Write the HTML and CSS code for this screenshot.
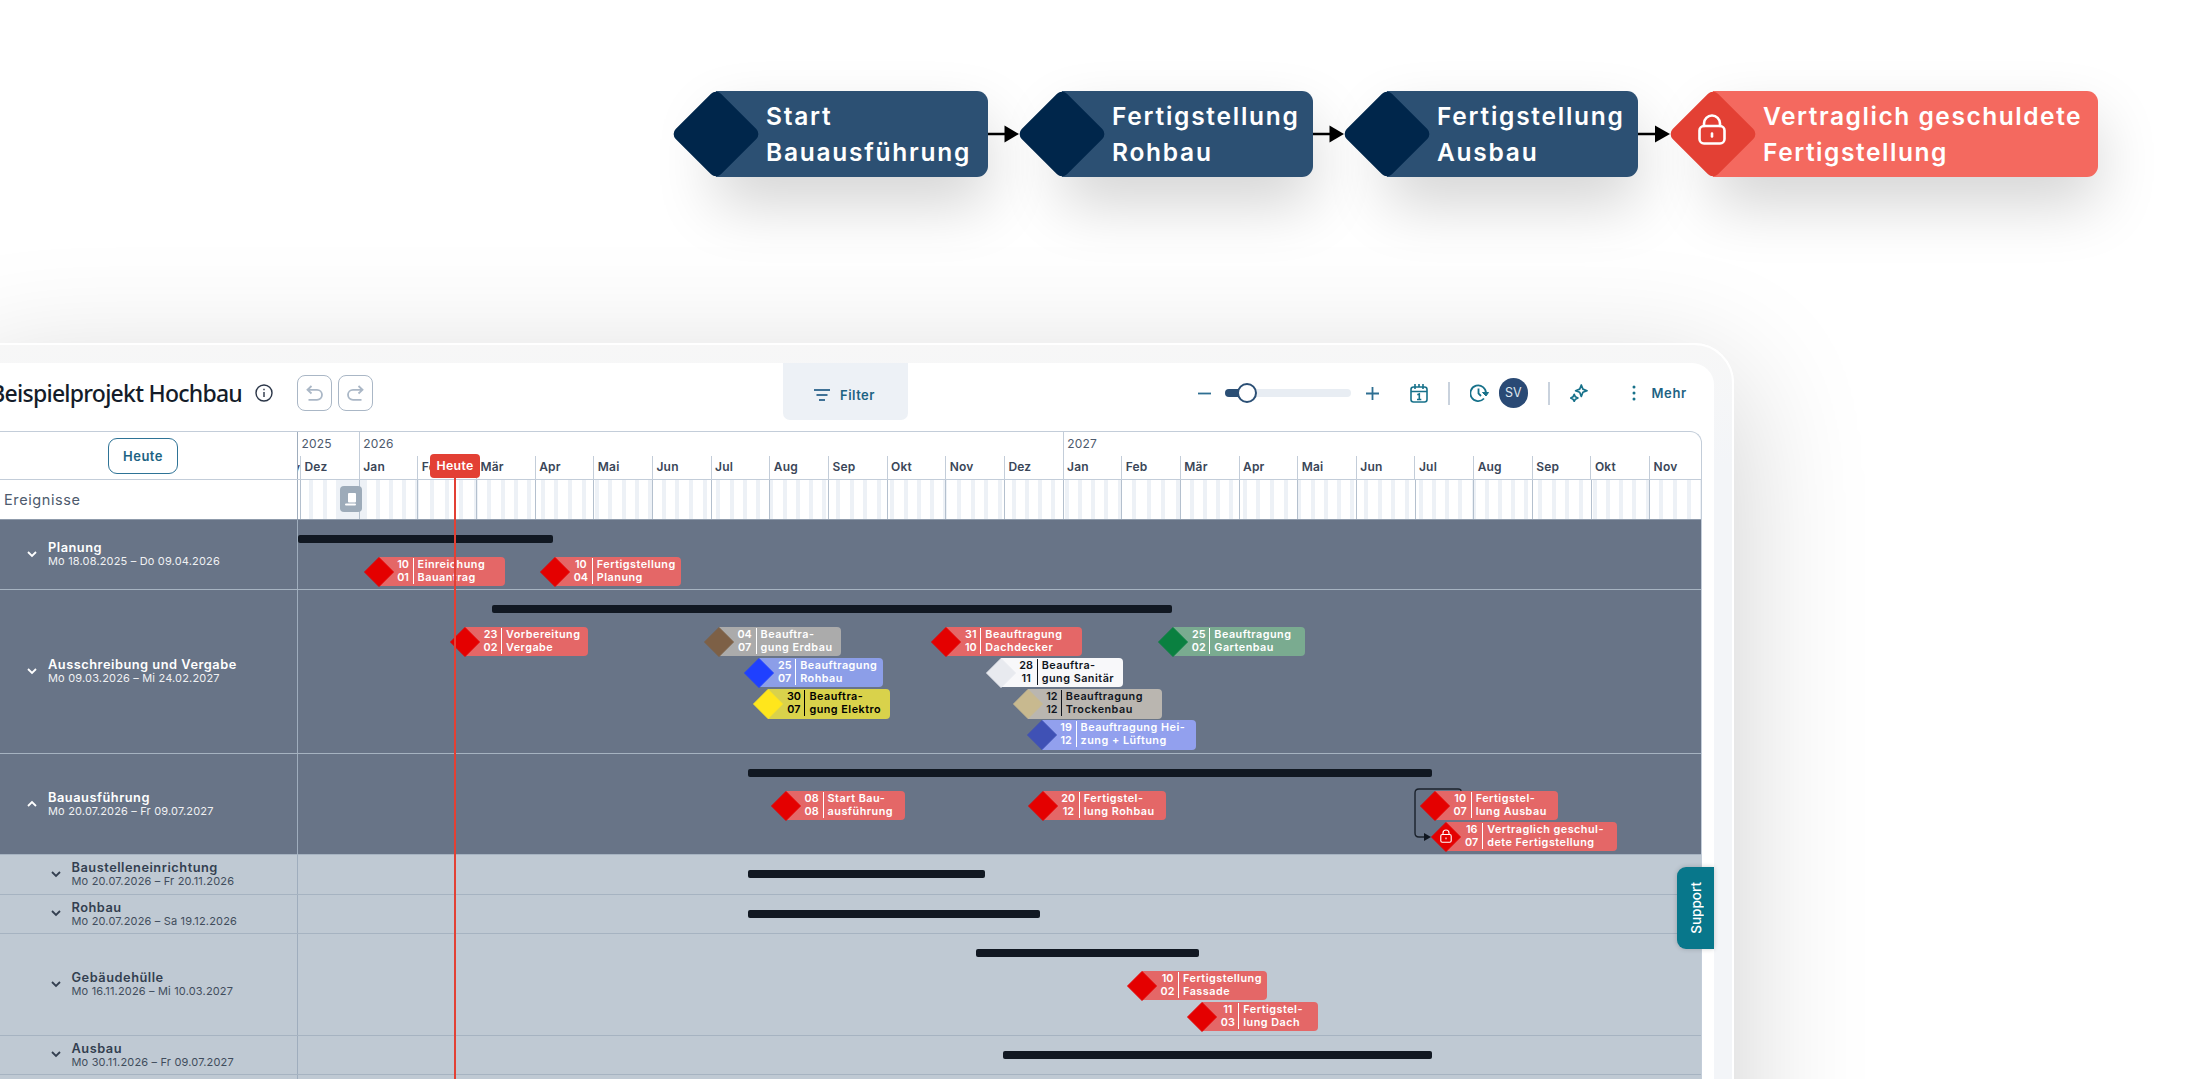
FILE: index.html
```
<!DOCTYPE html>
<html lang="de">
<head>
    <meta charset="UTF-8">
    <meta name="viewport" content="width=device-width, initial-scale=1.0">
    <title>Beispielprojekt Hochbau</title>
    <link rel="stylesheet" href="styles.css">
</head>
<body>

<div class="flow">
    <div class="step step-1">
        <div class="step-diamond"></div>
        <div class="step-body">Start<br>Bauausführung</div>
    </div>
    <svg class="arrow" width="31" height="18" viewBox="0 0 31 18"><path d="M0 9H18" stroke="#000" stroke-width="2.5"/><path d="M16.500 .5L31 9L16.500 17.500Z"/></svg>
    <div class="step step-2">
        <div class="step-diamond"></div>
        <div class="step-body">Fertigstellung<br>Rohbau</div>
    </div>
    <svg class="arrow" width="31" height="18" viewBox="0 0 31 18"><path d="M0 9H18" stroke="#000" stroke-width="2.5"/><path d="M16.500 .5L31 9L16.500 17.500Z"/></svg>
    <div class="step step-3">
        <div class="step-diamond"></div>
        <div class="step-body">Fertigstellung<br>Ausbau</div>
    </div>
    <svg class="arrow" width="32" height="18" viewBox="0 0 32 18"><path d="M0 9H18" stroke="#000" stroke-width="2.5"/><path d="M17 .5L32 9L17 17.500Z"/></svg>
    <div class="step step-4 step-red">
        <div class="step-diamond">
            <svg width="30" height="32" viewBox="0 0 30 32" fill="none" stroke="#fff" stroke-width="2.6" stroke-linecap="round"><rect x="2.500" y="12" width="25" height="17.500" rx="4.500"/><path d="M7 12V9.500a8 8 0 0 1 16 0V12"/><path d="M15 19.500V22.500"/></svg>
        </div>
        <div class="step-body">Vertraglich geschuldete<br>Fertigstellung</div>
    </div>
</div>

<div class="device">
    <div class="screen">
        <header class="toolbar">
            <h1 class="title">Beispielprojekt Hochbau</h1>
            <svg class="info" width="18" height="18" viewBox="0 0 18 18" fill="none" stroke="#2b3648" stroke-width="1.4"><circle cx="9" cy="9" r="8"/><path d="M9 8V13M9 4.800V6.300"/></svg>
            <div class="undo-group">
                <button class="btn-icon"><svg width="17" height="17" viewBox="0 0 17 17"><path d="M5.500 1L1.500 4.800L5.500 8.500M1.500 4.800H11A4.700 4.700 0 0 1 11 14.800H2.500"/></svg></button>
                <button class="btn-icon"><svg width="17" height="17" viewBox="0 0 17 17"><path d="M11.500 1L15.500 4.800L11.500 8.500M15.500 4.800H6A4.700 4.700 0 0 0 6 14.800H14.500"/></svg></button>
            </div>
            <div class="filter">
                <svg width="16" height="14" viewBox="0 0 16 14" fill="none" stroke="#3f7196" stroke-width="2"><path d="M0 2H16M2.500 7H13.500M5 12H11"/></svg>
                <span>Filter</span>
            </div>
            <div class="tools">
                <svg width="13" height="13" viewBox="0 0 13 13" stroke="#2f6f92" stroke-width="1.8"><path d="M0 6.500H13"/></svg>
                <div class="slider"><div class="slider-fill"></div><div class="slider-knob"></div></div>
                <svg class="plus" width="13" height="13" viewBox="0 0 13 13" stroke="#2f6f92" stroke-width="1.8"><path d="M0 6.500H13M6.500 0V13"/></svg>
                <svg class="calendar" width="18" height="19" viewBox="0 0 18 19" fill="none" stroke="#17718a" stroke-width="1.6"><rect x="1" y="3" width="16" height="15" rx="2.500"/><path d="M1 7.500H17M5 0V5M13 0V5M9 0V3M7.300 10.800L9.300 10V15.500M7 15.500H11.300"/></svg>
                <div class="divider"></div>
                <svg class="history" width="19" height="18" viewBox="0 0 19 18" fill="none" stroke="#17718a" stroke-width="1.8"><path d="M14 14.500A7.800 7.800 0 1 1 16 9.500"/><path d="M8.500 4.500V9.500L11 12"/><path d="M12.500 8.500H18.500L16 12Z" fill="#17718a" stroke-width="1"/></svg>
                <div class="avatar">SV</div>
                <div class="divider divider-2"></div>
                <svg class="sparkle" width="18" height="18" viewBox="0 0 18 18" fill="none" stroke="#17718a" stroke-width="1.7" stroke-linejoin="round"><path d="M11.300 1L12.900 5.100L17 6.700L12.900 8.300L11.300 12.400L9.700 8.300L5.600 6.700L9.700 5.100Z"/><path d="M4.200 10.300L5.400 12.800L7.900 14L5.400 15.200L4.200 17.400L3 15.200L.8 14L3 12.800Z"/></svg>
                <svg class="dots" width="4" height="18" viewBox="0 0 4 18" fill="#17718a"><circle cx="2" cy="3" r="1.500"/><circle cx="2" cy="9" r="1.500"/><circle cx="2" cy="15" r="1.500"/></svg>
                <span class="more">Mehr</span>
            </div>
        </header>

        <div class="board">
            <div class="head">
                <div class="head-left"><button class="btn-today">Heute</button></div>
                <div class="head-time">
                    <div class="years">
                        <div class="year year-first">2025</div>
                        <div class="year year-full">2026</div>
                        <div class="year">2027</div>
                    </div>
                    <div class="months" id="months"><span class="month-cut">Nov</span></div>
                </div>
            </div>
            <div class="events">
                <div class="events-label">Ereignisse</div>
                <div class="events-time" id="events-time">
                    <div class="event-icon">
                        <svg width="12" height="13" viewBox="0 0 12 13" fill="#fff"><rect x="3" y="0" width="8" height="9.500" rx="1"/><rect x="0" y="10.500" width="11" height="2" rx="1"/></svg>
                    </div>
                </div>
            </div>
            <div id="rows"></div>
            <div class="today-line"></div>
            <div class="today-flag">Heute</div>
        </div>

        <div class="support"><span>Support</span></div>
    </div>
</div>

<script>
    const TIME_LEFT = 298;
    const MONTH_WIDTH = 58.67;
    const FIRST_MONTH = 2;
    const monthNames = ["Jan", "Feb", "Mär", "Apr", "Mai", "Jun", "Jul", "Aug", "Sep", "Okt", "Nov", "Dez"];

    // bar: [from, to], milestones: [center, right, lane, date column, day, month, line 1, line 2, color]
    let rows = [
        {name: "Planung", date: "Mo 18.08.2025 – Do 09.04.2026", height: 70, level: 0, bar: [298, 552.5], items: [
            [378.6, 505, 0, 12, "10", "01", "Einreichung", "Bauantrag", "red"],
            [554.8, 680.6, 0, 15, "10", "04", "Fertigstellung", "Planung", "red"]
        ]},
        {name: "Ausschreibung und Vergabe", date: "Mo 09.03.2026 – Mi 24.02.2027", height: 164, level: 0, bar: [492, 1171.7], items: [
            [465, 588.2, 0, 14, "23", "02", "Vorbereitung", "Vergabe", "red"],
            [718.6, 840.7, 0, 15, "04", "07", "Beauftra-", "gung Erdbau", "brown"],
            [759.2, 882.8, 1, 14, "25", "07", "Beauftragung", "Rohbau", "blue"],
            [768.4, 890, 2, 14, "30", "07", "Beauftra-", "gung Elektro", "yellow"],
            [946.3, 1082.2, 0, 12, "31", "10", "Beauftragung", "Dachdecker", "red"],
            [1000.7, 1122.7, 1, 14, "28", "11", "Beauftra-", "gung Sanitär", "white"],
            [1027.8, 1162.5, 2, 11, "12", "12", "Beauftragung", "Trockenbau", "sand"],
            [1041.6, 1196.2, 3, 12, "19", "12", "Beauftragung Hei-", "zung + Lüftung", "indigo"],
            [1173.3, 1305, 0, 14, "25", "02", "Beauftragung", "Gartenbau", "green"]
        ]},
        {name: "Bauausführung", date: "Mo 20.07.2026 – Fr 09.07.2027", height: 101, level: 0, open: true, link: true, bar: [748, 1432], items: [
            [785.6, 905.4, 0, 15, "08", "08", "Start Bau-", "ausführung", "red"],
            [1042.8, 1166.4, 0, 14, "20", "12", "Fertigstel-", "lung Rohbau", "red"],
            [1434.7, 1558, 0, 14, "10", "07", "Fertigstel-", "lung Ausbau", "red"],
            [1446.2, 1617, 1, 14, "16", "07", "Vertraglich geschul-", "dete Fertigstellung", "red", true]
        ]},
        {name: "Baustelleneinrichtung", date: "Mo 20.07.2026 – Fr 20.11.2026", height: 40, level: 1, bar: [748, 984.5], items: []},
        {name: "Rohbau", date: "Mo 20.07.2026 – Sa 19.12.2026", height: 39, level: 1, bar: [748, 1040], items: []},
        {name: "Gebäudehülle", date: "Mo 16.11.2026 – Mi 10.03.2027", height: 102, level: 1, bar: [975.5, 1199], items: [
            [1142, 1266.7, 0, 14, "10", "02", "Fertigstellung", "Fassade", "red"],
            [1202.3, 1318, 1, 14, "11", "03", "Fertigstel-", "lung Dach", "red"]
        ]},
        {name: "Ausbau", date: "Mo 30.11.2026 – Fr 09.07.2027", height: 39, level: 1, bar: [1003, 1432], items: []},
        {name: "", date: "", height: 40, level: 1, items: []}
    ];

    function showMonths() {
        let text = "";
        for (let i = 0; i < 24; i++) {
            text += `<div class="month">${monthNames[(i + 11) % 12]}</div>`;
        }
        document.getElementById("months").innerHTML += text;
    }

    function showWeekends() {
        let text = `<div class="holiday"></div>`;
        for (let i = 0; i < 24; i++) {
            let start = FIRST_MONTH + i * MONTH_WIDTH;
            let days = new Date(2025, 12 + i, 0).getDate();
            let dayWidth = MONTH_WIDTH / days;
            for (let d = 1; d <= days; d++) {
                if (new Date(2025, 11 + i, d).getDay() === 6) {
                    text += `<i class="weekend" style="left:${start + (d - 1) * dayWidth}px"></i>`;
                }
            }
            text += `<i class="month-line" style="left:${start}px"></i>`;
        }
        document.getElementById("events-time").insertAdjacentHTML("afterbegin", text);
    }

    function milestone(m) {
        let left = m[0] - TIME_LEFT;
        let lock = m[9] ? `<svg class="lock" width="12" height="14" viewBox="0 0 12 14" fill="none" stroke="#fff" stroke-width="1.1"><rect x=".8" y="5.500" width="10.400" height="7.700" rx="1.500"/><path d="M3 5.500V4a3 3 0 0 1 6 0V5.500M6 8.500V10.300"/></svg>` : "";
        return `<div class="milestone ${m[8]}" style="left:${left}px; width:${m[1] - m[0]}px; top:${36.5 + m[2] * 31.3}px">
            <svg class="diamond" width="30" height="30" viewBox="0 0 30 30"><path d="M15 .5L29.500 15L15 29.500L.5 15Z" stroke-width="1" stroke-linejoin="round"/></svg>${lock}
            <div class="ms-date" style="width:${m[3]}px"><span>${m[4]}</span><span>${m[5]}</span></div>
            <div class="ms-text">${m[6]}<br>${m[7]}</div>
        </div>`;
    }

    function showRows() {
        let text = "";
        rows.forEach((row) => {
            text += `<div class="row level-${row.level}" style="height:${row.height}px">`;
            text += `<div class="row-label">`;
            if (row.name) {
                text += `<svg class="chevron ${row.open ? "open" : ""}" width="10" height="7" viewBox="0 0 10 7"><path d="M1 1L5 5L9 1"/></svg>`;
                text += `<div><div class="row-name">${row.name}</div><div class="row-date">${row.date}</div></div>`;
            }
            text += `</div><div class="row-time">`;
            if (row.bar) {
                text += `<div class="bar" style="left:${row.bar[0] - TIME_LEFT}px; width:${row.bar[1] - row.bar[0]}px"></div>`;
            }
            if (row.link) {
                text += `<svg class="link" width="50" height="56" viewBox="0 0 50 56"><path d="M48 6V5Q48 3 45 3H6Q2 3 2 7V47Q2 51 6 51H12" fill="none" stroke="#1b222c" stroke-width="1.400"/><path d="M11 47L18 51L11 55Z" fill="#101720"/></svg>`;
            }
            row.items.forEach((m) => text += milestone(m));
            text += `</div></div>`;
        });
        document.getElementById("rows").innerHTML = text;
    }

    showMonths();
    showWeekends();
    showRows();
</script>

</body>
</html>
```
FILE: styles.css
```
* {
    box-sizing: border-box;
}

html {
    overflow: hidden;
}

body {
    margin: 0;
    width: 2200px;
    height: 1079px;
    overflow: hidden;
    background: #fff;
    font-family: Inter, "Open Sans", sans-serif;
    color: #3a4658;
}

button {
    font-family: inherit;
    padding: 0;
    background: #fff;
}

/* milestone chain on top */
.flow {
    display: flex;
    align-items: center;
    padding: 91px 0 0 673px;
    position: relative;
    z-index: 2;
}

.step {
    display: flex;
    height: 86px;
    align-items: center;
    flex: none;
}

.step-diamond {
    width: 64px;
    height: 64px;
    margin: 0 11px;
    border-radius: 7px;
    background: #00264b;
    transform: rotate(45deg);
    position: relative;
    z-index: 1;
    flex: none;
    display: flex;
    align-items: center;
    justify-content: center;
}

.step-diamond svg {
    transform: rotate(-45deg) translate(-1px, -4px);
}

.step-body {
    flex: 1;
    height: 86px;
    margin-left: -43px;
    padding: 7px 0 0 50px;
    border-radius: 0 11px 11px 0;
    background: #2c5073;
    color: #fff;
    font-size: 24.500px;
    font-weight: 600;
    line-height: 36.300px;
    letter-spacing: 1.750px;
    white-space: nowrap;
    box-shadow: 0 28px 60px rgba(0, 0, 0, .17);
}

.step-1 { width: 315px; }
.step-2 { width: 294px; }
.step-3 { width: 294px; }
.step-4 { width: 428px; }

.step-red .step-diamond {
    background: #e34034;
}

.step-red .step-body {
    background: #f4695f;
    letter-spacing: 1.550px;
}

.arrow {
    flex: none;
    position: relative;
    z-index: 1;
}

/* device frame */
.device {
    width: 1774px;
    height: 900px;
    margin: 166px 0 0 -40px;
    padding: 18px 17px 0 38px;
    border: 2px solid #fff;
    border-radius: 40px;
    background: linear-gradient(to bottom, #f7f7f7, #f3f5f8 120px);
    box-shadow: 0 35px 130px 5px rgba(0, 0, 0, .18);
}

.screen {
    position: relative;
    height: 900px;
    background: #fff;
    border-radius: 0 22px 0 0;
    width: 1714px;
}

.toolbar {
    display: flex;
    height: 68px;
    color: #1d6383;
}

.title {
    width: 242px;
    margin: 0;
    display: flex;
    justify-content: flex-end;
    flex: none;
    font-family: "Noto Sans", sans-serif;
    font-size: 23px;
    font-weight: 500;
    letter-spacing: -.750px;
    line-height: 60px;
    white-space: nowrap;
    color: #141c29;
}

.info {
    margin: 21px 0 0 13px;
}

.undo-group {
    display: flex;
    gap: 6px;
    margin: 12px 0 0 24px;
}

.btn-icon {
    width: 35px;
    height: 36px;
    border: 1.500px solid #aab7c6;
    border-radius: 8px;
    display: flex;
    align-items: center;
    justify-content: center;
}

.btn-icon svg {
    fill: none;
    stroke: #aab7c6;
    stroke-width: 1.800;
}

.filter {
    width: 125px;
    height: 57px;
    margin-left: 410px;
    padding: 7px 0 0 31px;
    display: flex;
    align-items: center;
    gap: 10px;
    border-radius: 0 0 7px 7px;
    background: #edf1f6;
    font-size: 13px;
    font-weight: 600;
    letter-spacing: .5px;
}

.tools {
    display: flex;
    align-items: center;
    height: 60px;
    margin-left: 290px;
}

.slider {
    width: 126px;
    height: 8px;
    margin-left: 14px;
    border-radius: 4px;
    background: #e8edf3;
    display: flex;
    align-items: center;
}

.slider-fill {
    width: 16px;
    height: 8px;
    border-radius: 4px 0 0 4px;
    background: #2b4f75;
}

.slider-knob {
    width: 20px;
    height: 20px;
    margin-left: -4px;
    border: 2px solid #2b4f75;
    border-radius: 50%;
    background: #fff;
}

.plus { margin-left: 15px; }
.calendar { margin-left: 31px; }

.divider {
    width: 1.500px;
    height: 23px;
    margin-left: 20px;
    background: #c9d2dd;
}

.history { margin-left: 20px; }

.avatar {
    width: 29.500px;
    height: 29.500px;
    margin-left: 10px;
    border-radius: 50%;
    background: #2a4a75;
    color: #dfe6ee;
    font-size: 12.500px;
    line-height: 29.500px;
    text-align: center;
}

.divider-2 { margin-left: 20px; }
.sparkle { margin-left: 20px; }
.dots { margin-left: 44px; }

.more {
    margin-left: 16px;
    font-size: 13px;
    font-weight: 600;
    letter-spacing: .6px;
}

/* gantt board */
.board {
    position: relative;
    width: 1702px;
    height: 700px;
    border-top: 1.500px solid #c3cdd9;
    border-right: 1.500px solid #c3cdd9;
    border-radius: 0 12px 0 0;
    overflow: hidden;
}

.head,
.events,
.row {
    display: flex;
}

.head-left,
.events-label,
.row-label {
    width: 298px;
    flex: none;
    border-right: 1.500px solid #9fadbd;
}

.head {
    height: 48px;
    border-bottom: 1px solid #c3cdd9;
}

.head-left {
    padding: 6px 0 0 108px;
}

.btn-today {
    width: 70px;
    height: 36px;
    border: 1.500px solid #2e7396;
    border-radius: 9px;
    color: #1d6383;
    font-size: 13px;
    font-weight: 600;
    letter-spacing: .5px;
}

.head-time {
    flex: 1;
    overflow: hidden;
}

.years,
.months {
    display: flex;
}

.year {
    flex: none;
    height: 24px;
    padding: 3px 0 0 3.500px;
    border-left: 1px solid #c3cdd9;
    font-size: 12px;
    line-height: 17px;
    letter-spacing: .2px;
    color: #4d5a6d;
}

.year-first {
    width: 60.700px;
    border-left: none;
}

.year-full {
    width: 704px;
}

.month-cut {
    display: flex;
    justify-content: flex-end;
    width: 2px;
    overflow: hidden;
    flex: none;
}

.months {
    font-size: 12px;
    font-weight: 600;
    line-height: 23px;
    height: 24px;
}

.month {
    width: 58.670px;
    flex: none;
    padding: 0 0 0 3.500px;
    line-height: 21px;
    letter-spacing: .2px;
    border-left: 1px solid #c3cdd9;
}

.events {
    height: 40px;
    border-bottom: 1px solid #8f9bab;
}

.events-label {
    padding-left: 4px;
    font-size: 14.500px;
    line-height: 40px;
    letter-spacing: .6px;
    color: #4d5a6d;
}

.events-time {
    position: relative;
    flex: 1;
    overflow: hidden;
}

.weekend {
    position: absolute;
    top: 0;
    width: 4px;
    height: 40px;
    background: #edf1f6;
}

.month-line {
    position: absolute;
    top: 0;
    width: 1px;
    height: 40px;
    background: #b4c0ce;
}

.holiday {
    position: absolute;
    left: 39px;
    top: 0;
    width: 30px;
    height: 40px;
    background: #edf1f6;
}

.event-icon {
    position: absolute;
    left: 42px;
    top: 6px;
    width: 22px;
    height: 26px;
    border-radius: 4px;
    background: #9dabb9;
    display: flex;
    align-items: center;
    justify-content: center;
}

.row {
    border-bottom: 1px solid #a6b3c1;
}

.level-0 {
    background: #687487;
    color: #fff;
}

.level-1 {
    background: #bfc9d3;
    color: #333f50;
}

.row-label {
    display: flex;
    align-items: center;
    gap: 11px;
    padding: 0 0 1px 27px;
}

.level-1 .row-label {
    padding-left: 50.500px;
}

.row-name {
    font-size: 12.800px;
    font-weight: 600;
    line-height: 14px;
    letter-spacing: .520px;
}

.row-date {
    font-size: 11px;
    line-height: 12px;
    letter-spacing: .170px;
    opacity: .9;
}

.chevron {
    fill: none;
    stroke: currentColor;
    stroke-width: 1.800;
}

.open {
    transform: rotate(180deg);
}

.row-time {
    position: relative;
    flex: 1;
}

.bar {
    position: absolute;
    top: 15px;
    height: 8px;
    border-radius: 2px;
    background: #111822;
}

.milestone {
    position: absolute;
    height: 29.500px;
    padding-left: 18.500px;
    display: flex;
    border-radius: 0 4px 4px 0;
    color: #fff;
    font-size: 10.800px;
    font-weight: 600;
    line-height: 13px;
    white-space: nowrap;
}

.diamond {
    position: absolute;
    left: -15px;
    top: 0;
}

.lock {
    position: absolute;
    left: -6px;
    top: 7px;
}

.ms-date {
    display: flex;
    flex-direction: column;
    align-items: center;
    padding-top: 1px;
}

.ms-text {
    height: 26px;
    margin: 1px 0 0 3.500px;
    padding-left: 4px;
    border-left: 1.200px solid currentColor;
    letter-spacing: .5px;
}

.red { background: #e46767; }
.red .diamond { fill: #e40000; stroke: #e40000; }
.brown { background: #ababab; }
.brown .diamond { fill: #7d6046; stroke: #7d6046; }
.blue { background: #8c9ee8; }
.blue .diamond { fill: #1f40ff; stroke: #1f40ff; }
.yellow { background: #d9d24b; color: #000; }
.yellow .diamond { fill: #ffe61c; stroke: #ffe61c; }
.white { background: #f8f8fa; color: #10151d; }
.white .diamond { fill: #e8eaef; stroke: #e8eaef; }
.sand { background: #bab6b0; color: #10151d; }
.sand .diamond { fill: #c8b98f; stroke: #c8b98f; }
.indigo { background: #92a0ee; }
.indigo .diamond { fill: #3f51b5; stroke: #3f51b5; }
.green { background: #7aab90; }
.green .diamond { fill: #0a8040; stroke: #0a8040; }

.link {
    position: absolute;
    left: 1115px;
    top: 32px;
}

.today-line {
    position: absolute;
    left: 454px;
    top: 44px;
    width: 2px;
    height: 660px;
    background: #e34034;
}

.today-flag {
    position: absolute;
    left: 430px;
    top: 22px;
    width: 50px;
    height: 24px;
    border-radius: 4px;
    background: #e34034;
    color: #fff;
    font-size: 12.300px;
    font-weight: 600;
    line-height: 23px;
    letter-spacing: .3px;
    text-align: center;
}

.support {
    position: absolute;
    left: 1677px;
    top: 504px;
    width: 37px;
    height: 82px;
    border-radius: 9px 0 0 9px;
    background: #08778b;
    box-shadow: 0 0 5px rgba(0, 0, 0, .2);
    display: flex;
    align-items: center;
    justify-content: center;
    color: #fff;
    font-size: 13.500px;
    font-weight: 500;
}

.support span {
    writing-mode: vertical-rl;
    transform: rotate(180deg);
}
```
